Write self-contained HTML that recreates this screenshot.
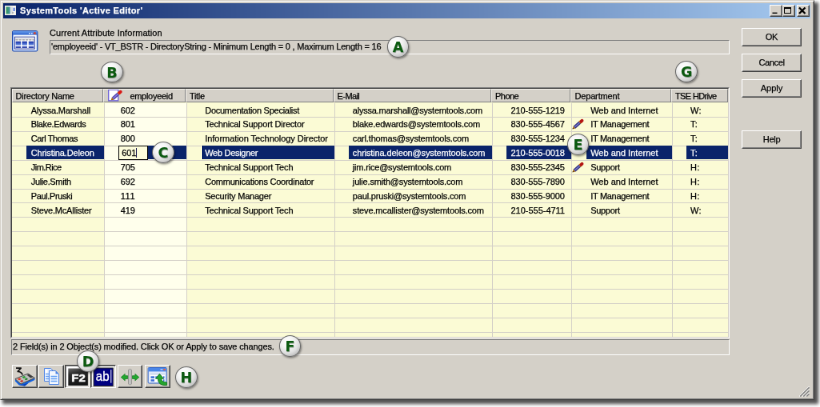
<!DOCTYPE html>
<html lang="en"><head><meta charset="utf-8"><title>SystemTools 'Active Editor'</title>
<style>
html,body{margin:0;padding:0;background:#fff;overflow:hidden}
body{width:820px;height:407px;position:relative}
#stage{position:absolute;left:0;top:0;width:1025px;height:509px;transform:scale(.8);transform-origin:0 0;will-change:transform;font-family:"Liberation Sans",sans-serif;font-size:11px;color:#000}
.t{white-space:nowrap;display:inline-block;-webkit-text-stroke:0.25px currentColor}
#win{position:absolute;left:0;top:0;width:1015.7px;height:498.3px;background:#d4d0c8;border:1px solid;border-color:#d4d0c8 #404040 #404040 #d4d0c8;box-shadow:inset 1px 1px 0 #fff,inset -1px -1px 0 #808080,4px 4px 4px 1px rgba(0,0,0,.68);padding:0;box-sizing:content-box}
#win>*{position:absolute}
#tb{left:3px;top:3.1px;width:1009.2px;height:18.9px;background:linear-gradient(90deg,#0a246a 0%,#a6caf0 100%)}
#tb>*{position:absolute}
#tbi{left:2.25px;top:2.5px}
#tbt{left:21px;top:2px;color:#fff;font-weight:bold;font-size:11px;line-height:14px;white-space:nowrap}
.cb{top:1.8px;width:12px;height:10.8px;background:#d4d0c8;border:1px solid;border-color:#fff #404040 #404040 #fff;box-shadow:inset -1px -1px 0 #808080;padding:1px}
.cb svg{display:block}
#bigicon{left:14.3px;top:36.7px}
#lbl{left:61px;top:33px;line-height:14px}
#info{left:61px;top:49px;width:848px;height:15.6px;border:1px solid;border-color:#808080 #fff #fff #808080}
#info .t{position:absolute;left:1px;top:1px;line-height:13px}
.btn{left:926px;width:71px;height:19px;border:1px solid;border-color:#fff #404040 #404040 #fff;box-shadow:inset -1px -1px 0 #808080,inset 1px 1px 0 #d4d0c8;padding:1px;text-align:center;line-height:19px}
.btn .t{transform-origin:50% 50%}
#grid{border:1px solid;border-color:#808080 #fff #fff #808080;background:#fbfbd5}
#gi{position:absolute;left:0;top:0;right:0;bottom:0;border:1px solid;border-color:#404040 #d4d0c8 #d4d0c8 #404040;overflow:hidden}
#gi>*{position:absolute}
.hc{top:0;background:#d4d0c8;border:1px solid;border-color:#f4f2ec #808080 #808080 #f4f2ec;box-sizing:border-box;line-height:16.2px;padding-left:4px;overflow:hidden}
.hc2{padding-left:32.600px}
.hic{position:absolute;left:5.600px;top:-0.500px}
.colbg{height:300px;box-sizing:border-box;border-right:1px solid #d4d0c8;
 background-image:repeating-linear-gradient(180deg,transparent 0,transparent 16.917px,#d4d0c8 16.917px,#d4d0c8 17.917px)}
.c0,.c2,.c3,.c4,.c5,.c6{background-color:#fbfbd5}
.c1{background-color:#ffffec}
.row{left:0;width:100%;height:17.917px}
.cell{position:absolute;top:0;height:17.917px;line-height:19.600px}
.ct{position:absolute;top:0}
.hl{position:absolute;right:1px;top:0;height:16.917px;background:#0a246a}
.sel .ct{color:#fff}
.pen{position:absolute;left:-0.5px;top:0}
.edit{position:absolute;top:0;height:15.917px;border:1px solid #000;background:#fdfddc;line-height:17.6px}
.edit .t{position:absolute;left:3.600px;top:0}
.caret{position:absolute;left:20.8px;top:1.800px;width:1px;height:12.400px;background:#1a1a50}
#status{left:13px;top:423.3px;width:896px;height:17.6px;border:1px solid;border-color:#808080 #fff #fff #808080;line-height:16.5px}
#status .t{position:absolute;left:1px;top:0}
.tbn{top:455px;width:28px;height:25px;border:1px solid;border-color:#fff #404040 #404040 #fff;box-shadow:inset -1px -1px 0 #808080;padding:1px}
.tbn.dn{border-color:#404040 #fff #fff #404040;box-shadow:inset 1px 1px 0 #808080}
.tbn svg{display:block}
#grip{left:998px;top:482px}
.badge{position:absolute;width:25.8px;height:24.8px;border-radius:50%;border:1px solid #666;background:radial-gradient(circle at 38% 30%,#ffffff 0%,#f6f6f6 30%,#e0e0e0 58%,#b4b4b4 86%,#949494 100%);box-shadow:1px 1.5px 2.5px rgba(0,0,0,.42);text-align:center}
.badge span{display:block;font-family:"DejaVu Sans","Liberation Sans",sans-serif;font-weight:bold;font-size:17.6px;line-height:27px;color:#0b5a10;text-shadow:0.6px 0.6px 0.8px rgba(0,40,0,.45)}

</style></head>
<body>
<div id="stage">
<div id="win">
<div id="tb"><svg id="tbi" width="14" height="12" viewBox="0 0 14 12"><defs><linearGradient id="tg" x1="0" y1="0" x2="1" y2="0"><stop offset="0" stop-color="#2f9a55"/><stop offset="1" stop-color="#4a8fa6"/></linearGradient></defs><rect x="0" y="0" width="14" height="12" fill="#f3efe3"/><rect x="1" y="1" width="12" height="10" fill="#fdfdfd"/><rect x="1.500" y="1.500" width="5.200" height="9" fill="url(#tg)"/><rect x="7" y="1.500" width="3" height="9" fill="#d9dde0"/><rect x="10.700" y="2.600" width="1.800" height="4.400" fill="#3b62d2"/><rect x="9" y="8.500" width="2.500" height="1" fill="#8a8a8a"/></svg><span id="tbt"><span class="t" style="letter-spacing:0.359px">SystemTools 'Active Editor'</span></span>
<div class="cb" style="left:957.5px"><svg width="12" height="10"><rect x="1.5" y="7.6" width="6" height="1.4" fill="#000"/></svg></div>
<div class="cb" style="left:973.5px"><svg width="12" height="10"><rect x="0.5" y="1.5" width="8" height="7" fill="none" stroke="#000"/><rect x="0" y="1" width="9" height="2" fill="#000"/></svg></div>
<div class="cb" style="left:991.5px"><svg width="12" height="10"><path d="M1 1.5 L8.5 9 M8.5 1.5 L1 9" stroke="#000" stroke-width="2.3" fill="none"/></svg></div>
</div>
<svg id="bigicon" width="33" height="27" viewBox="0 0 33 27"><defs><linearGradient id="ig" x1="0" y1="0" x2="0" y2="1"><stop offset="0" stop-color="#6aa0ee"/><stop offset="1" stop-color="#2c60cc"/></linearGradient><linearGradient id="cg" x1="0" y1="0" x2="0" y2="1"><stop offset="0" stop-color="#1b2f9e"/><stop offset=".45" stop-color="#3557c4"/><stop offset="1" stop-color="#7f9fe6"/></linearGradient></defs>
<rect x="0.5" y="0.5" width="31.4" height="25.5" rx="1.6" fill="#3f7ae0" stroke="#2048ac"/><rect x="1" y="1" width="30.4" height="4.6" fill="url(#ig)"/><rect x="1.6" y="5.6" width="29.2" height="19.6" fill="#f7faff"/><rect x="27.2" y="2.3" width="2.5" height="2.4" fill="#e2401c"/><rect x="21" y="3" width="1.6" height="1.4" fill="#dfeaff"/><rect x="24" y="3" width="1.6" height="1.4" fill="#dfeaff"/>
<rect x="3.4" y="8.200" width="24.800" height="14.900" fill="#fff" stroke="#24369a" stroke-width="1"/><rect x="3.900" y="8.700" width="23.800" height="3" fill="#e4e4e8"/><path d="M4.500 11.900 H27.500" stroke="#555" stroke-width=".7" stroke-dasharray="3 1.200"/>
<g fill="url(#cg)"><rect x="4.600" y="13.700" width="6.400" height="5"/><rect x="12.500" y="13.700" width="6.400" height="5"/><rect x="20.800" y="13.700" width="6.400" height="5"/></g><g fill="#1e36a6"><rect x="4.600" y="20.100" width="6.400" height="1.800"/><rect x="12.500" y="20.100" width="6.400" height="1.800"/><rect x="20.800" y="20.100" width="6.400" height="1.800"/></g></svg>
<div id="lbl"><span class="t" style="letter-spacing:0.087px">Current Attribute Information</span></div>
<div id="info"><span class="t" style="letter-spacing:-0.217px">'employeeid' - VT_BSTR - DirectoryString - Minimum Length = 0 , Maximum Length = 16</span></div>
<div class="btn" style="top:34px"><span class="t" style="letter-spacing:-0.156px">OK</span></div>
<div class="btn" style="top:66px"><span class="t" style="letter-spacing:-0.350px">Cancel</span></div>
<div class="btn" style="top:98px"><span class="t" style="letter-spacing:-0.008px">Apply</span></div>
<div class="btn" style="top:162px"><span class="t" style="letter-spacing:-0.250px">Help</span></div>
<div id="grid" style="left:11.50px;top:107.62px;width:897.87px;height:312.81px"><div id="gi">
<div class="hc" style="left:0.00px;width:114.31px;height:17.53px"><span class="t" style="letter-spacing:-0.228px">Directory Name</span></div>
<div class="hc hc2" style="left:114.31px;width:103.21px;height:17.53px"><svg class="hic" width="18" height="16" viewBox="0 0 18 16"><rect x="0.7" y="1.2" width="12" height="13.6" fill="#fff" stroke="#6c60d6" stroke-width="1.3"/><g transform="translate(3.2,-1.0)"><path d="M2.9 13.2 L9.9 7.05" stroke="#4a3fa8" stroke-width="3.9"/><path d="M3.2 12.9 L9.9 7.05" stroke="#8a7ae0" stroke-width="1.5"/><path d="M9.7 7.2 L11.35 5.8" stroke="#f2a400" stroke-width="3.9"/><path d="M11.3 5.85 L12.5 4.8" stroke="#d81818" stroke-width="3.9" stroke-linecap="round"/><path d="M0.5 15.3 L4.15 14.63 L1.65 11.77 Z" fill="#a8640c"/></g></svg><span class="t" style="letter-spacing:-0.280px">employeeid</span></div>
<div class="hc" style="left:217.53px;width:184.54px;height:17.53px"><span class="t" style="letter-spacing:-0.328px">Title</span></div>
<div class="hc" style="left:402.06px;width:197.50px;height:17.53px"><span class="t" style="letter-spacing:-0.584px">E-Mail</span></div>
<div class="hc" style="left:599.56px;width:99.31px;height:17.53px"><span class="t" style="letter-spacing:-0.531px">Phone</span></div>
<div class="hc" style="left:698.88px;width:125.69px;height:17.53px"><span class="t" style="letter-spacing:-0.137px">Department</span></div>
<div class="hc" style="left:824.56px;width:71.31px;height:17.53px"><span class="t" style="letter-spacing:-0.653px">TSE HDrive</span></div>
<div class="colbg c0" style="left:0.00px;width:116.38px;top:17.93px;"></div>
<div class="colbg c1" style="left:116.38px;width:103.21px;top:17.93px;"></div>
<div class="colbg c2" style="left:219.59px;width:184.54px;top:17.93px;"></div>
<div class="colbg c3" style="left:404.12px;width:197.50px;top:17.93px;"></div>
<div class="colbg c4" style="left:601.62px;width:99.31px;top:17.93px;"></div>
<div class="colbg c5" style="left:700.94px;width:125.69px;top:17.93px;"></div>
<div class="colbg c6" style="left:826.62px;width:69.25px;top:17.93px;border-right:0;"></div>
<div class="row" style="top:17.93px">
<div class="cell" style="left:0.00px;width:116.38px"><span class="t ct" style="letter-spacing:-0.190px;left:24.25px">Alyssa.Marshall</span></div><div class="cell" style="left:116.38px;width:103.21px"><span class="t ct" style="letter-spacing:-0.117px;left:19.75px">602</span></div><div class="cell" style="left:219.59px;width:184.54px"><span class="t ct" style="letter-spacing:-0.261px;left:22.16px">Documentation Specialist</span></div><div class="cell" style="left:404.12px;width:197.50px"><span class="t ct" style="letter-spacing:-0.223px;left:22.25px">alyssa.marshall@systemtools.com</span></div><div class="cell" style="left:601.62px;width:99.31px"><span class="t ct" style="letter-spacing:-0.092px;left:22.38px">210-555-1219</span></div><div class="cell" style="left:700.94px;width:125.69px"><span class="t ct" style="letter-spacing:0.013px;left:22.69px">Web and Internet</span></div><div class="cell" style="left:826.62px;width:69.25px"><span class="t ct" style="letter-spacing:0.188px;left:22.00px">W:</span></div>
</div>
<div class="row" style="top:35.84px">
<div class="cell" style="left:0.00px;width:116.38px"><span class="t ct" style="letter-spacing:-0.359px;left:24.25px">Blake.Edwards</span></div><div class="cell" style="left:116.38px;width:103.21px"><span class="t ct" style="letter-spacing:-0.117px;left:19.75px">801</span></div><div class="cell" style="left:219.59px;width:184.54px"><span class="t ct" style="letter-spacing:-0.186px;left:22.16px">Technical Support Director</span></div><div class="cell" style="left:404.12px;width:197.50px"><span class="t ct" style="letter-spacing:-0.166px;left:22.25px">blake.edwards@systemtools.com</span></div><div class="cell" style="left:601.62px;width:99.31px"><span class="t ct" style="letter-spacing:-0.092px;left:22.38px">830-555-4567</span></div><div class="cell" style="left:700.94px;width:125.69px"><svg class="pen" width="16" height="18" viewBox="0 0 16 18"><path d="M2.9 13.2 L9.9 7.05" stroke="#2e2e7c" stroke-width="3.9"/><path d="M3.2 12.9 L9.9 7.05" stroke="#7676cc" stroke-width="1.5"/><path d="M9.7 7.2 L11.35 5.8" stroke="#e09a10" stroke-width="3.9"/><path d="M11.3 5.85 L12.5 4.8" stroke="#b41414" stroke-width="3.9" stroke-linecap="round"/><path d="M0.5 15.3 L4.15 14.63 L1.65 11.77 Z" fill="#a86a18"/><path d="M0.5 15.3 L2.0 15.0 L1.0 13.9 Z" fill="#111"/></svg><span class="t ct" style="letter-spacing:-0.284px;left:22.69px">IT Management</span></div><div class="cell" style="left:826.62px;width:69.25px"><span class="t ct" style="letter-spacing:0.188px;left:22.00px">T:</span></div>
</div>
<div class="row" style="top:53.76px">
<div class="cell" style="left:0.00px;width:116.38px"><span class="t ct" style="letter-spacing:-0.402px;left:24.25px">Carl Thomas</span></div><div class="cell" style="left:116.38px;width:103.21px"><span class="t ct" style="letter-spacing:-0.117px;left:19.75px">800</span></div><div class="cell" style="left:219.59px;width:184.54px"><span class="t ct" style="letter-spacing:-0.045px;left:22.16px">Information Technology Director</span></div><div class="cell" style="left:404.12px;width:197.50px"><span class="t ct" style="letter-spacing:-0.178px;left:22.25px">carl.thomas@systemtools.com</span></div><div class="cell" style="left:601.62px;width:99.31px"><span class="t ct" style="letter-spacing:-0.092px;left:22.38px">830-555-1234</span></div><div class="cell" style="left:700.94px;width:125.69px"><span class="t ct" style="letter-spacing:-0.284px;left:22.69px">IT Management</span></div><div class="cell" style="left:826.62px;width:69.25px"><span class="t ct" style="letter-spacing:0.188px;left:22.00px">T:</span></div>
</div>
<div class="row sel" style="top:71.68px">
<div class="cell" style="left:0.00px;width:116.38px"><span class="hl" style="left:18.62px"></span><span class="t ct" style="letter-spacing:-0.151px;left:24.25px">Christina.Deleon</span></div><div class="cell" style="left:116.38px;width:103.21px"><span class="hl" style="left:54.25px"></span><span class="edit" style="left:16.88px;width:35.37px"><span class="t" style="letter-spacing:-0.117px">601</span><i class="caret"></i></span></div><div class="cell" style="left:219.59px;width:184.54px"><span class="hl" style="left:17.79px"></span><span class="t ct" style="letter-spacing:-0.295px;left:22.16px">Web Designer</span></div><div class="cell" style="left:404.12px;width:197.50px"><span class="hl" style="left:17.00px"></span><span class="t ct" style="letter-spacing:-0.145px;left:22.25px">christina.deleon@systemtools.com</span></div><div class="cell" style="left:601.62px;width:99.31px"><span class="hl" style="left:16.75px"></span><span class="t ct" style="letter-spacing:-0.092px;left:22.38px">210-555-0018</span></div><div class="cell" style="left:700.94px;width:125.69px"><span class="hl" style="left:17.19px"></span><span class="t ct" style="letter-spacing:0.013px;left:22.69px">Web and Internet</span></div><div class="cell" style="left:826.62px;width:69.25px"><span class="hl" style="left:16.75px;right:0"></span><span class="t ct" style="letter-spacing:0.188px;left:22.00px">T:</span></div>
</div>
<div class="row" style="top:89.59px">
<div class="cell" style="left:0.00px;width:116.38px"><span class="t ct" style="letter-spacing:-0.533px;left:24.25px">Jim.Rice</span></div><div class="cell" style="left:116.38px;width:103.21px"><span class="t ct" style="letter-spacing:-0.117px;left:19.75px">705</span></div><div class="cell" style="left:219.59px;width:184.54px"><span class="t ct" style="letter-spacing:-0.154px;left:22.16px">Technical Support Tech</span></div><div class="cell" style="left:404.12px;width:197.50px"><span class="t ct" style="letter-spacing:-0.195px;left:22.25px">jim.rice@systemtools.com</span></div><div class="cell" style="left:601.62px;width:99.31px"><span class="t ct" style="letter-spacing:-0.092px;left:22.38px">830-555-2345</span></div><div class="cell" style="left:700.94px;width:125.69px"><svg class="pen" width="16" height="18" viewBox="0 0 16 18"><path d="M2.9 13.2 L9.9 7.05" stroke="#2e2e7c" stroke-width="3.9"/><path d="M3.2 12.9 L9.9 7.05" stroke="#7676cc" stroke-width="1.5"/><path d="M9.7 7.2 L11.35 5.8" stroke="#e09a10" stroke-width="3.9"/><path d="M11.3 5.85 L12.5 4.8" stroke="#b41414" stroke-width="3.9" stroke-linecap="round"/><path d="M0.5 15.3 L4.15 14.63 L1.65 11.77 Z" fill="#a86a18"/><path d="M0.5 15.3 L2.0 15.0 L1.0 13.9 Z" fill="#111"/></svg><span class="t ct" style="letter-spacing:-0.276px;left:22.69px">Support</span></div><div class="cell" style="left:826.62px;width:69.25px"><span class="t ct" style="letter-spacing:0.250px;left:22.00px">H:</span></div>
</div>
<div class="row" style="top:107.51px">
<div class="cell" style="left:0.00px;width:116.38px"><span class="t ct" style="letter-spacing:-0.348px;left:24.25px">Julie.Smith</span></div><div class="cell" style="left:116.38px;width:103.21px"><span class="t ct" style="letter-spacing:-0.117px;left:19.75px">692</span></div><div class="cell" style="left:219.59px;width:184.54px"><span class="t ct" style="letter-spacing:-0.248px;left:22.16px">Communications Coordinator</span></div><div class="cell" style="left:404.12px;width:197.50px"><span class="t ct" style="letter-spacing:-0.172px;left:22.25px">julie.smith@systemtools.com</span></div><div class="cell" style="left:601.62px;width:99.31px"><span class="t ct" style="letter-spacing:-0.092px;left:22.38px">830-555-7890</span></div><div class="cell" style="left:700.94px;width:125.69px"><span class="t ct" style="letter-spacing:0.013px;left:22.69px">Web and Internet</span></div><div class="cell" style="left:826.62px;width:69.25px"><span class="t ct" style="letter-spacing:0.250px;left:22.00px">H:</span></div>
</div>
<div class="row" style="top:125.43px">
<div class="cell" style="left:0.00px;width:116.38px"><span class="t ct" style="letter-spacing:-0.377px;left:24.25px">Paul.Pruski</span></div><div class="cell" style="left:116.38px;width:103.21px"><span class="t ct" style="letter-spacing:0.695px;left:19.75px">111</span></div><div class="cell" style="left:219.59px;width:184.54px"><span class="t ct" style="letter-spacing:-0.206px;left:22.16px">Security Manager</span></div><div class="cell" style="left:404.12px;width:197.50px"><span class="t ct" style="letter-spacing:-0.181px;left:22.25px">paul.pruski@systemtools.com</span></div><div class="cell" style="left:601.62px;width:99.31px"><span class="t ct" style="letter-spacing:-0.092px;left:22.38px">830-555-9000</span></div><div class="cell" style="left:700.94px;width:125.69px"><span class="t ct" style="letter-spacing:-0.284px;left:22.69px">IT Management</span></div><div class="cell" style="left:826.62px;width:69.25px"><span class="t ct" style="letter-spacing:0.250px;left:22.00px">H:</span></div>
</div>
<div class="row" style="top:143.34px">
<div class="cell" style="left:0.00px;width:116.38px"><span class="t ct" style="letter-spacing:-0.195px;left:24.25px">Steve.McAllister</span></div><div class="cell" style="left:116.38px;width:103.21px"><span class="t ct" style="letter-spacing:-0.117px;left:19.75px">419</span></div><div class="cell" style="left:219.59px;width:184.54px"><span class="t ct" style="letter-spacing:-0.154px;left:22.16px">Technical Support Tech</span></div><div class="cell" style="left:404.12px;width:197.50px"><span class="t ct" style="letter-spacing:-0.155px;left:22.25px">steve.mcallister@systemtools.com</span></div><div class="cell" style="left:601.62px;width:99.31px"><span class="t ct" style="letter-spacing:-0.017px;left:22.38px">210-555-4711</span></div><div class="cell" style="left:700.94px;width:125.69px"><span class="t ct" style="letter-spacing:-0.276px;left:22.69px">Support</span></div><div class="cell" style="left:826.62px;width:69.25px"><span class="t ct" style="letter-spacing:0.188px;left:22.00px">W:</span></div>
</div>
</div></div>
<div id="status"><span class="t" style="letter-spacing:-0.145px">2 Field(s) in 2 Object(s) modified. Click OK or Apply to save changes.</span></div>
<div class="tbn" style="left:14.00px;width:27.88px"><svg width="27.88" height="25" viewBox="0 0 27.88 25"><path d="M3 2.2 H9.2 L5.2 6.3 Q10 6.6 11.2 10.6" stroke="#111" stroke-width="1.7" fill="none" stroke-linejoin="round"/><path d="M1.9 15.8 L9 22.2 L26.4 14.6 V17 L18.500 20.8 L14 24.500 L6.500 23.300 L1.900 18.600 Z" fill="#1262e2"/><path d="M6.500 23.300 L14 24.500 L18.500 20.800 L12 22.800 Z" fill="#0a3fb0"/><path d="M1.900 15.600 L18 9 L26.400 14.500 L9 22 Z" fill="#bdbdbd" stroke="#3a3a3a" stroke-width=".9"/><path d="M4.800 15.600 L7.800 14.400 L9.800 16 L6.800 17.300 Z" fill="#e8301a"/><path d="M8 18.300 L10.800 17.100 L12.400 18.500 L9.600 19.700 Z" fill="#c8281a"/><path d="M10.500 13.200 L13.500 12 L15.500 13.600 L12.500 14.900 Z" fill="#1fa02a"/><path d="M13.600 15.800 L16.400 14.600 L18 16 L15.200 17.200 Z" fill="#18801f"/><path d="M16.500 10.800 L19.300 9.700 L24.300 13.200 L21.300 14.500 Z" fill="#3c3c3c"/></svg></div>
<div class="tbn" style="left:47.25px;width:27.50px"><svg width="27.50" height="25" viewBox="0 0 27.50 25"><path d="M5.500 2.500 H13.500 L17.500 6.500 V18.500 H5.500 Z" fill="#dfeaff" stroke="#4f86e6"/><path d="M6.500 3.500 H9.500 V17.500 H6.500 Z" fill="#fff"/><g stroke="#6aa2f2" stroke-width="1.600"><path d="M7 9.500 H11 M7 12.500 H11 M7 15.500 H11"/></g><path d="M11.500 5.500 H19.500 L23.500 9.500 V22.500 H11.500 Z" fill="#f4f8ff" stroke="#4f86e6"/><path d="M19.500 5.500 V9.500 H23.500 Z" fill="#4f86e6"/><g stroke="#62a0f4" stroke-width="1.700"><path d="M13.500 12.500 H21.500 M13.500 15.500 H21.500 M13.500 18.500 H21.500"/></g></svg></div>
<div class="tbn dn" style="left:79.75px;width:27.25px"><svg width="27.25" height="25" viewBox="0 0 27.25 25"><rect x="0" y="0" width="30" height="26" fill="#fff"/><defs><linearGradient id="f2g" x1="0" y1="0" x2="0.3" y2="1"><stop offset="0" stop-color="#6a6a6a"/><stop offset=".35" stop-color="#2c2c2c"/><stop offset="1" stop-color="#161616"/></linearGradient></defs><rect x="2.300" y="2.500" width="24.600" height="21.500" fill="url(#f2g)"/><text x="6.300" y="18.800" font-family="Liberation Sans,sans-serif" font-weight="bold" font-size="13" fill="#fff" stroke="#fff" stroke-width=".5" textLength="17.400" lengthAdjust="spacingAndGlyphs">F2</text></svg></div>
<div class="tbn dn" style="left:112.25px;width:27.25px"><svg width="27.25" height="25" viewBox="0 0 27.25 25"><rect x="0" y="0" width="30" height="26" fill="#fff"/><rect x="2.100" y="2" width="24.200" height="22.500" fill="#000080" stroke="#2a2a2a" stroke-width="1"/><text x="4.800" y="18.400" font-family="Liberation Sans,sans-serif" font-size="17" fill="#fff" stroke="#fff" stroke-width=".35" textLength="16.800" lengthAdjust="spacingAndGlyphs">ab</text><rect x="23.300" y="4.100" width="1" height="16.600" fill="#fff"/></svg></div>
<div class="tbn" style="left:145.62px;width:27.88px"><svg width="27.88" height="25" viewBox="0 0 27.88 25"><defs><linearGradient id="cyl" x1="0" y1="0" x2="1" y2="0"><stop offset="0" stop-color="#8a8a8a"/><stop offset=".45" stop-color="#e4e4e4"/><stop offset="1" stop-color="#8f8f8f"/></linearGradient></defs><rect x="11.600" y="3.400" width="3.800" height="19.500" rx="1.600" fill="url(#cyl)" stroke="#777" stroke-width=".5"/><g transform="translate(0,0.800)"><path d="M2.300 12.800 L7.200 8.600 V10.900 H10.600 V14.700 H7.200 V17 Z" fill="#23a82f" stroke="#0c7a18" stroke-width=".7"/><path d="M24.800 12.800 L19.900 8.600 V10.900 H16.500 V14.700 H19.900 V17 Z" fill="#23a82f" stroke="#0c7a18" stroke-width=".7"/></g></svg></div>
<div class="tbn" style="left:179.62px;width:28.88px"><svg width="28.88" height="25" viewBox="0 0 28.88 25"><rect x="2.150" y="1.500" width="23.050" height="19.500" rx="1.200" fill="#dfe9fb" stroke="#2e62c8"/><rect x="2.600" y="2" width="22.200" height="4.400" fill="#4a86e8"/><rect x="21.500" y="3" width="2" height="2" fill="#ff5a2a"/><rect x="17.500" y="3.300" width="3" height="1.200" fill="#cfe0ff"/><rect x="4.500" y="8.500" width="18.500" height="11" fill="#fff"/><rect x="4.500" y="8.500" width="18.500" height="2" fill="#c9d6ee"/><g fill="#3c6fd8"><rect x="5.500" y="12.300" width="4.500" height="2.600"/><rect x="5.500" y="16.200" width="4.500" height="2.600"/><rect x="11.300" y="12.300" width="3" height="2.600"/><rect x="21" y="12.300" width="1.500" height="2.600"/><rect x="21" y="16.200" width="1.500" height="2.600"/></g><path d="M16.400 9.300 L21.600 15.300 H18.800 Q18.600 19.600 25.600 20 V23.600 Q14.600 24.600 14.300 15.300 H11.600 Z" fill="#25a52e" stroke="#0b6a16" stroke-width=".8" stroke-linejoin="round"/></svg></div>
<svg id="grip" width="13" height="13" viewBox="0 0 13 13"><g stroke="#fff" stroke-width="1.1"><path d="M12.5 0 L0 12.5"/><path d="M12.5 4 L4 12.5"/><path d="M12.5 8 L8 12.5"/></g><g stroke="#808080" stroke-width="1.500"><path d="M12.5 1.200 L1.200 12.500"/><path d="M12.500 5.200 L5.200 12.500"/><path d="M12.500 9.200 L9.200 12.500"/></g></svg>
</div>
<div class="badge" style="left:483.60px;top:45.35px"><span>A</span></div>
<div class="badge" style="left:125.97px;top:76.60px"><span>B</span></div>
<div class="badge" style="left:190.10px;top:177.35px"><span>C</span></div>
<div class="badge" style="left:96.10px;top:438.16px"><span>D</span></div>
<div class="badge" style="left:708.60px;top:167.35px"><span>E</span></div>
<div class="badge" style="left:348.60px;top:419.10px"><span>F</span></div>
<div class="badge" style="left:844.23px;top:76.35px"><span>G</span></div>
<div class="badge" style="left:218.91px;top:457.85px"><span>H</span></div>
</div>
</body></html>
